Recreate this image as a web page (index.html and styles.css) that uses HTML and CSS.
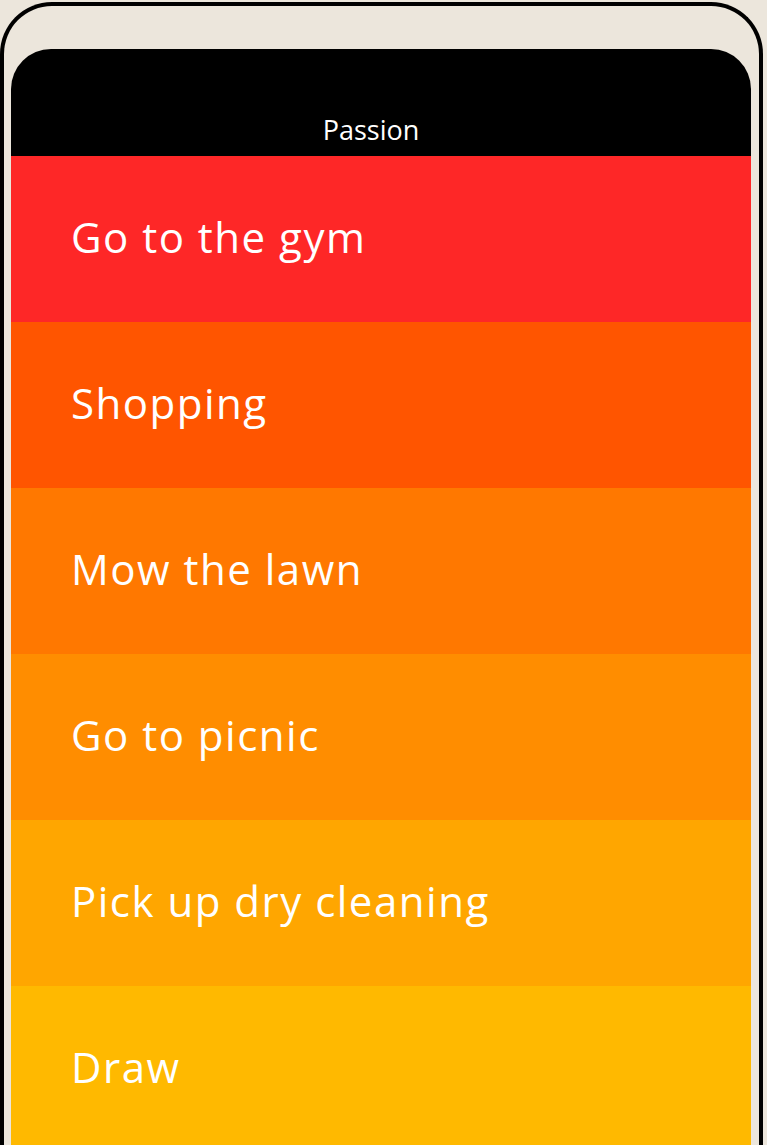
FILE: index.html
```html
<!DOCTYPE html>
<html>
<head>
<meta charset="utf-8">
<link rel="stylesheet" href="styles.css">
</head>
<body>
<div class="frame">
  <div class="screen">
    <div class="header"><span class="title">Passion</span></div>
    <ul class="list">
      <li class="row r1">Go to the gym</li>
      <li class="row r2">Shopping</li>
      <li class="row r3">Mow the lawn</li>
      <li class="row r4">Go to picnic</li>
      <li class="row r5">Pick up dry cleaning</li>
      <li class="row r6">Draw</li>
    </ul>
  </div>
</div>
</body>
</html>
```
FILE: styles.css
```css
html, body {
  margin: 0;
  padding: 0;
  background: #ece6dc;
  overflow: hidden;
}
.frame {
  box-sizing: border-box;
  width: 763px;
  height: 1200px;
  margin-top: 2px;
  border: 4px solid #000;
  border-bottom: none;
  border-radius: 52px 52px 0 0;
  padding: 43px 8px 0 7px;
}
.screen {
  border-radius: 40px 40px 0 0;
  overflow: hidden;
  background: #000;
}
.header {
  height: 107px;
  display: flex;
  align-items: flex-end;
  justify-content: center;
  padding-right: 20px;
  box-sizing: border-box;
  padding-bottom: 9px;
}
.title {
  color: #fff;
  font-family: "Open Sans", sans-serif;
  font-size: 27px;
  line-height: 34px;
}
.list {
  list-style: none;
  margin: 0;
  padding: 0;
}
.row {
  box-sizing: border-box;
  height: 166px;
  display: flex;
  align-items: center;
  padding-left: 60px;
  padding-bottom: 6px;
  color: #fff;
  font-family: "Open Sans", sans-serif;
  font-size: 42px;
  letter-spacing: 1.5px;
}
.r1 { background: #fe2727; }
.r2 { background: #ff5500; }
.r3 { background: #ff7800; }
.r4 { background: #ff8d00; }
.r5 { background: #ffa600; }
.r6 { background: #ffb900; }
```
